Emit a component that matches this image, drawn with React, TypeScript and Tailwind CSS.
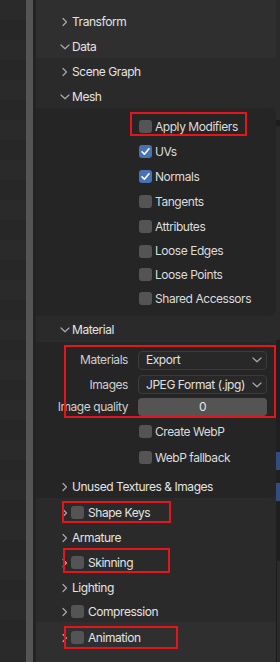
import React from 'react';

const font = { fontFamily: 'Inter, "Noto Sans", sans-serif' };

function ChevronRight() {
  return (
    <svg width="8" height="10" viewBox="0 0 8 10" className="shrink-0">
      <path d="M2 1.5 L5.5 5 L2 8.5" fill="none" stroke="#a9a9a9" strokeWidth="1.2" strokeLinecap="round" strokeLinejoin="round" />
    </svg>
  );
}

function ChevronDown() {
  return (
    <svg width="10" height="8" viewBox="0 0 10 8" className="shrink-0">
      <path d="M1 2 L5 5.8 L9 2" fill="none" stroke="#a9a9a9" strokeWidth="1.2" strokeLinecap="round" strokeLinejoin="round" />
    </svg>
  );
}

function Checkbox({ checked = false }: { checked?: boolean }) {
  if (checked) {
    return (
      <span className="w-[13px] h-[13px] rounded-[3px] bg-[#4772b3] flex items-center justify-center shrink-0">
        <svg width="11" height="11" viewBox="0 0 11 11">
          <path d="M2 5.8 L4.4 8.2 L9 2.8" fill="none" stroke="#ffffff" strokeWidth="1.6" strokeLinecap="round" strokeLinejoin="round" />
        </svg>
      </span>
    );
  }
  return <span className="w-[13px] h-[13px] rounded-[3px] bg-[#545454] shrink-0" />;
}

function Header({ label, open = false, h = 'h-[25px]' }: { label: string; open?: boolean; h?: string }) {
  return (
    <div className={`${h} flex items-center pt-[2px] pl-[22px] text-[12px] tracking-[-0.45px] text-[#e4e4e4] whitespace-nowrap`}>
      <span className="w-[14px] flex items-center justify-center">{open ? <ChevronDown /> : <ChevronRight />}</span>
      <span>{label}</span>
    </div>
  );
}

function CheckHeader({ label, h = 'h-[25px]' }: { label: string; h?: string }) {
  return (
    <div className={`${h} flex items-center pt-[2px] pl-[22px] text-[12px] tracking-[-0.45px] text-[#e4e4e4] whitespace-nowrap`}>
      <span className="w-[13px] flex items-center justify-center"><ChevronRight /></span>
      <Checkbox />
      <span className="ml-[4px]">{label}</span>
    </div>
  );
}

function CheckRow({ label, checked = false, h = 'h-[25px]' }: { label: string; checked?: boolean; h?: string }) {
  return (
    <div className={`${h} flex items-center pt-[2px] pl-[103px] gap-[3px] text-[12px] tracking-[-0.45px] text-[#dcdcdc] whitespace-nowrap`}>
      <Checkbox checked={checked} />
      <span>{label}</span>
    </div>
  );
}

function RedBox({ className }: { className: string }) {
  return <span className={`absolute border-2 border-[#e3161e] pointer-events-none ${className}`} />;
}

function Dropdown({ value }: { value: string }) {
  return (
    <div className="w-[129px] h-[19px] rounded-[4px] bg-[#282828] border border-[#3b3b3b] flex items-center justify-between pl-[7px] pr-[4px] text-[12px] tracking-[-0.45px] text-[#e0e0e0] whitespace-nowrap">
      <span>{value}</span>
      <ChevronDown />
    </div>
  );
}

export default function App() {
  return (
    <div className="w-[280px] h-[662px] flex overflow-hidden bg-[#282828]" style={font}>
      {/* outliner strip */}
      <div className="w-[26px] h-full bg-[repeating-linear-gradient(180deg,#2a2a2a_0px,#2a2a2a_20px,#272727_20px,#272727_40px)]" />
      <div className="w-[7px] h-full bg-[#545454]" />
      <div className="w-[3px] h-full bg-[#232323]" />

      {/* properties panel */}
      <div className="w-[240px] h-full flex flex-col">
        <div className="h-[58px] bg-[#2f2f2f] overflow-hidden">
          <div className="h-[8px] overflow-hidden">
            <div className="-mt-[19px]">
              <Header label="Include" />
            </div>
          </div>
          <Header label="Transform" />
          <Header label="Data" open />
        </div>

        <div className="bg-[#2a2a2a]">
          <Header label="Scene Graph" />
          <Header label="Mesh" open />

          <div className="bg-[#252525] rounded-r-[6px] pt-[5px] pb-[6px]">
            <div className="relative">
              <CheckRow label="Apply Modifiers" />
              <RedBox className="left-[94px] top-[-1px] w-[117px] h-[24px]" />
            </div>
            <CheckRow label="UVs" checked />
            <CheckRow label="Normals" checked />
            <CheckRow label="Tangents" />
            <CheckRow label="Attributes" />
            <CheckRow label="Loose Edges" h="h-[24px]" />
            <CheckRow label="Loose Points" h="h-[23px]" />
            <CheckRow label="Shared Accessors" />
          </div>

          <Header label="Material" open h="h-[26px]" />

          <div className="bg-[#252525] rounded-r-[6px] pt-[5px]">
            <div className="relative">
              <div className="h-[24px] flex items-center pt-[2px] gap-[10px] text-[12px] tracking-[-0.45px]">
                <span className="w-[92px] text-right text-[#cfcfcf]">Materials</span>
                <Dropdown value="Export" />
              </div>
              <div className="h-[25px] flex items-center pt-[2px] gap-[10px] text-[12px] tracking-[-0.45px]">
                <span className="w-[92px] text-right text-[#cfcfcf]">Images</span>
                <Dropdown value="JPEG Format (.jpg)" />
              </div>
              <div className="h-[21px] flex items-center pt-[1px] gap-[10px] text-[12px] tracking-[-0.45px]">
                <span className="w-[92px] text-right text-[#cfcfcf] whitespace-nowrap">Image quality</span>
                <div className="w-[129px] h-[18px] rounded-[4px] bg-[#545454] flex items-center justify-center text-[#e6e6e6]">0</div>
              </div>
              <RedBox className="left-[28px] top-[-2px] w-[212px] h-[73px]" />
            </div>
            <CheckRow label="Create WebP" h="h-[27px]" />
            <CheckRow label="WebP fallback" />
            <div className="h-[5px]" />
            <Header label="Unused Textures & Images" h="h-[24px]" />
          </div>

          <div className="pt-[1px]">
            <div className="relative">
              <CheckHeader label="Shape Keys" />
              <RedBox className="left-[26px] top-[2px] w-[109px] h-[22px]" />
            </div>
            <Header label="Armature" />
            <div className="relative">
              <CheckHeader label="Skinning" />
              <RedBox className="left-[27px] top-[-1px] w-[107px] h-[25px]" />
            </div>
            <Header label="Lighting" />
            <CheckHeader label="Compression" h="h-[23px]" />
          </div>
        </div>

        <div className="flex-1 bg-[#2f2f2f] pt-[2px]">
          <div className="relative">
            <CheckHeader label="Animation" />
            <RedBox className="left-[28px] top-[2px] w-[114px] h-[23px]" />
          </div>
        </div>
      </div>

      {/* neighbouring editor edge */}
      <div className="w-[4px] h-full flex flex-col">
        <div className="h-[120px] bg-[#2a2a2a]" />
        <div className="h-[6px] bg-[#1d1d1d]" />
        <div className="h-[214px] bg-[#2a2a2a]" />
        <div className="h-[112px] bg-[#1f1f1f]" />
        <div className="h-[18px] bg-[#334d80]" />
        <div className="h-[13px] bg-[#1f1f1f]" />
        <div className="h-[18px] bg-[#334d80]" />
        <div className="h-[60px] bg-[#1f1f1f]" />
        <div className="flex-1 bg-[#2b2b2b] border-l border-[#1c1c1c]" />
      </div>
    </div>
  );
}
